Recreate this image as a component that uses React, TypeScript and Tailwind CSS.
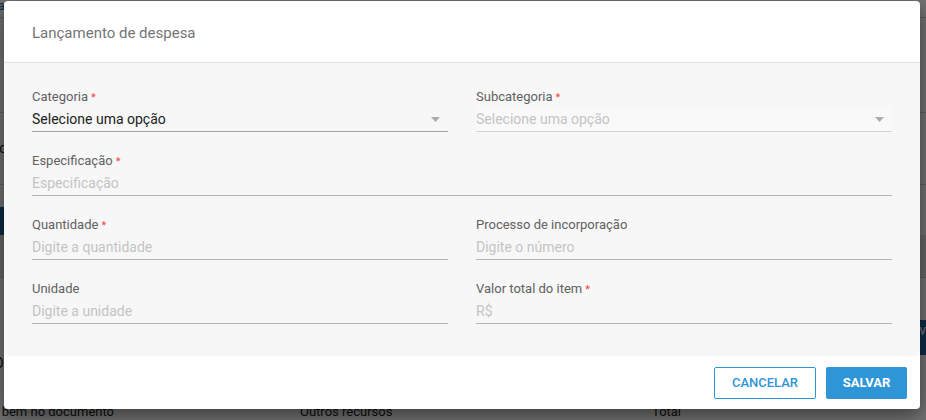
import React from "react";

const font = { fontFamily: "Roboto, 'Noto Sans', Arial, sans-serif" };

function Label({ text, required }: { text: string; required?: boolean }) {
  return (
    <div className="h-[16px] text-[13px] leading-[16px] text-[#616161]">
      {text}
      {required && <span className="ml-[3px] text-[11px] text-[#f44336]">*</span>}
    </div>
  );
}

function Field({
  label,
  required,
  placeholder,
  value,
  select,
  line = "border-[#b3b3b3]",
  bg = "",
}: {
  label: string;
  required?: boolean;
  placeholder?: string;
  value?: string;
  select?: boolean;
  line?: string;
  bg?: string;
}) {
  return (
    <div className="flex flex-col">
      <Label text={label} required={required} />
      <div
        className={`mt-[2px] flex h-[25px] items-center justify-between border-b ${line} ${bg}`}
      >
        <span
          className={`text-[14px] leading-[20px] ${value ? "text-[#212121]" : "text-[#c4c4c4]"}`}
        >
          {value ?? placeholder}
        </span>
        {select && (
          <svg width="9" height="5" viewBox="0 0 9 5" className="mr-[8px]">
            <path d="M0 0 L9 0 L4.5 5 Z" fill="#acacac" />
          </svg>
        )}
      </div>
    </div>
  );
}

export default function App() {
  return (
    <div className="relative h-[420px] w-[926px] overflow-hidden bg-white" style={font}>
      {/* underlying page */}
      <div className="flex h-full flex-col text-[14px] text-[#222]">
        <div className="flex h-[18px] items-start border-b border-[#d0d0d0]">
          <span className="-ml-[2px] text-[12px] leading-[12px] text-[#1f5f9a]">a</span>
        </div>
        <div className="h-[95px] border-b border-[#d0d0d0]" />
        <div className="flex h-[72px] items-center border-b border-[#d0d0d0]">
          <span className="-ml-[10px]">Do</span>
        </div>
        <div className="h-[22px]" />
        <div className="h-[28px] w-[120px] bg-[#1f5f9a]" />
        <div className="h-[43px] border-b border-[#d0d0d0] bg-[#e6e6e6]" />
        <div className="flex h-[77px] items-end justify-end">
          <div className="h-[35px] w-[120px] bg-[#1f5f9a] text-right text-white">v</div>
        </div>
        <div className="flex h-[16px] items-center">
          <span className="-ml-[6px]">O</span>
        </div>
        <div className="flex-1" />
        <div className="flex h-[16px] items-start whitespace-nowrap text-[13px] leading-[16px]">
          <span className="-ml-[9px] w-[309px]">o bem no documento</span>
          <span className="w-[352px]">Outros recursos</span>
          <span>Total</span>
        </div>
      </div>

      {/* overlay */}
      <div className="absolute inset-0 bg-black/55" />

      {/* modal */}
      <div className="absolute left-[4px] top-[1px] flex w-[916px] flex-col overflow-hidden rounded-[4px] bg-white shadow-[0_6px_20px_rgba(0,0,0,0.5)]">
        <div className="flex h-[62px] items-center border-b border-[#e3e3e3] px-[28px] pt-[3px]">
          <span className="text-[15px] text-[#757575]">Lançamento de despesa</span>
        </div>
        <div className="flex flex-col gap-[21px] rounded-b-[6px] bg-[#f7f7f7] px-[28px] pb-[32px] pt-[26px]">
          <div className="grid grid-cols-2 gap-x-[28px]">
            <Field
              label="Categoria"
              required
              value="Selecione uma opção"
              select
              line="border-[#a3a3a3]"
            />
            <Field
              label="Subcategoria"
              required
              placeholder="Selecione uma opção"
              select
              line="border-[#d3d3d3]"
              bg="bg-[#f9f9f9]"
            />
          </div>
          <Field label="Especificação" required placeholder="Especificação" />
          <div className="grid grid-cols-2 gap-x-[28px]">
            <Field label="Quantidade" required placeholder="Digite a quantidade" />
            <Field label="Processo de incorporação" placeholder="Digite o número" />
          </div>
          <div className="grid grid-cols-2 gap-x-[28px]">
            <Field label="Unidade" placeholder="Digite a unidade" />
            <Field label="Valor total do item" required placeholder="R$" />
          </div>
        </div>
        <div className="flex h-[53px] items-center justify-end gap-[10px] pr-[13px]">
          <button className="flex h-[32px] w-[102px] items-center justify-center rounded-[2px] border border-[#2e95d7] text-[13px] font-medium text-[#2e95d7]">
            CANCELAR
          </button>
          <button className="flex h-[32px] w-[81px] items-center justify-center rounded-[2px] bg-[#2e95d7] text-[13px] font-bold text-white">
            SALVAR
          </button>
        </div>
      </div>
    </div>
  );
}
